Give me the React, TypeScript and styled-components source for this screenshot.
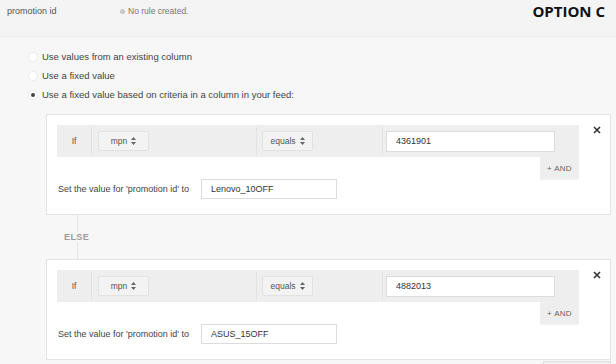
import styled, { createGlobalStyle } from "styled-components";

const GlobalStyle = createGlobalStyle`
  body {
    margin: 0;
    background: #f7f7f7;
    font-family: "Liberation Sans", Arial, sans-serif;
    color: #444;
  }
`;

const Header = styled.div`
  display: flex;
  align-items: flex-start;
  height: 37px;
  padding: 4px 11px 0 7px;
  box-sizing: border-box;
  background: #f4f4f4;
  border-bottom: 1px solid #ebebeb;
`;

const AttrName = styled.div`
  width: 113px;
  font-size: 9px;
  line-height: 14px;
  color: #555;
`;

const Status = styled.div`
  display: flex;
  align-items: center;
  gap: 3px;
  font-size: 8.5px;
  line-height: 14px;
  color: #777;
  &::before {
    content: "";
    width: 5px;
    height: 5px;
    border-radius: 50%;
    background: #c8c8c8;
  }
`;

const OptionTag = styled.div`
  margin-left: auto;
  font-family: "Open Sans", "Liberation Sans", sans-serif;
  font-weight: 700;
  font-size: 15px;
  line-height: 14px;
  color: #111;
`;

const Body = styled.div`
  padding: 10px 0 0 0;
`;

const RadioList = styled.div`
  display: flex;
  flex-direction: column;
  padding-left: 28px;
  margin-bottom: 10px;
`;

const RadioRow = styled.label`
  display: flex;
  align-items: center;
  gap: 4px;
  height: 19px;
  font-size: 9.5px;
  color: #444;
`;

const RadioDot = styled.span<{ $checked?: boolean }>`
  width: 10px;
  height: 10px;
  box-sizing: border-box;
  border-radius: 50%;
  background: #fff;
  border: 1px solid #ececec;
  display: flex;
  align-items: center;
  justify-content: center;
  &::after {
    content: "";
    width: 4px;
    height: 4px;
    border-radius: 50%;
    background: ${(p) => (p.$checked ? "#444" : "transparent")};
  }
`;

const Rules = styled.div`
  margin-left: 46px;
  width: 565px;
`;

const Card = styled.div`
  display: flex;
  background: #fff;
  border: 1px solid #e3e3e3;
  padding: 10px 0 15px 10px;
`;

const CardMain = styled.div`
  width: 522px;
  display: flex;
  flex-direction: column;
`;

const CloseButton = styled.div`
  padding: 1px 0 0 14px;
  height: 9px;
  svg {
    display: block;
  }
`;

const ConditionRow = styled.div`
  display: flex;
  align-items: center;
  height: 32px;
  background: #eeeeee;
`;

const Cell = styled.div<{ $w: number; $pad?: number }>`
  display: flex;
  align-items: center;
  width: ${(p) => p.$w}px;
  padding-left: ${(p) => p.$pad ?? 0}px;
  box-sizing: border-box;
  height: 100%;
  font-size: 8.5px;
  color: #555;
`;

const IfCell = styled(Cell)`
  justify-content: center;
`;

const Divider = styled.div`
  width: 1px;
  height: 28px;
  background: #e2e2e2;
`;

const Select = styled.div`
  display: flex;
  align-items: center;
  justify-content: center;
  gap: 4px;
  width: 51px;
  height: 20px;
  box-sizing: border-box;
  background: #f3f3f3;
  border: 1px solid #e2e2e2;
  border-radius: 2px;
  font-size: 8.5px;
  color: #555;
`;

const TextInput = styled.div<{ $w: number; $h: number }>`
  display: flex;
  align-items: center;
  width: ${(p) => p.$w}px;
  height: ${(p) => p.$h}px;
  box-sizing: border-box;
  padding-left: 9px;
  background: #fff;
  border: 1px solid #dcdcdc;
  font-size: 9px;
  color: #333;
`;

const AndButton = styled.div`
  align-self: flex-end;
  width: 39px;
  height: 22px;
  display: flex;
  align-items: center;
  justify-content: center;
  background: #eeeeee;
  border-radius: 0 0 2px 2px;
  box-shadow: 0 1px 1px rgba(0, 0, 0, 0.06);
  font-size: 8px;
  letter-spacing: 0.3px;
  color: #666;
`;

const SetRow = styled.div`
  display: flex;
  align-items: center;
  height: 20px;
`;

const SetLabel = styled.div`
  width: 144px;
  padding-left: 1px;
  box-sizing: border-box;
  font-size: 9px;
  color: #444;
`;

const ElseZone = styled.div`
  position: relative;
  height: 44px;
  display: flex;
  align-items: center;
  padding-left: 18px;
  &::before {
    content: "";
    position: absolute;
    left: 31px;
    top: 0;
    bottom: 0;
    width: 1px;
    background: #e4e4e4;
  }
`;

const ElseLabel = styled.span`
  position: relative;
  background: #f7f7f7;
  font-size: 9px;
  font-weight: 700;
  letter-spacing: 0.4px;
  color: #9a9a9a;
`;

const Footer = styled.div`
  display: flex;
  justify-content: flex-end;
  margin-top: 1px;
`;

const FooterButton = styled.div`
  width: 66px;
  height: 24px;
  background: #efefef;
  border: 1px solid #e0e0e0;
`;

function Arrows() {
  return (
    <svg width="5" height="8" viewBox="0 0 5 8">
      <path d="M2.5 0 L5 3 L0 3 Z M0 5 L5 5 L2.5 8 Z" fill="#666" />
    </svg>
  );
}

function CloseIcon() {
  return (
    <svg width="8" height="8" viewBox="0 0 8 8">
      <path d="M1 1 L7 7 M7 1 L1 7" stroke="#333" strokeWidth="1.6" />
    </svg>
  );
}

interface IRule {
  field: string;
  op: string;
  value: string;
  result: string;
}

const rules: IRule[] = [
  { field: "mpn", op: "equals", value: "4361901", result: "Lenovo_10OFF" },
  { field: "mpn", op: "equals", value: "4882013", result: "ASUS_15OFF" },
];

function RuleCard({ rule }: { rule: IRule }) {
  return (
    <Card>
      <CardMain>
        <ConditionRow>
          <IfCell $w={34}>If</IfCell>
          <Divider />
          <Cell $w={164} $pad={6}>
            <Select>
              {rule.field} <Arrows />
            </Select>
          </Cell>
          <Divider />
          <Cell $w={125} $pad={5}>
            <Select>
              {rule.op} <Arrows />
            </Select>
          </Cell>
          <Divider />
          <Cell $w={196} $pad={3}>
            <TextInput $w={169} $h={21}>
              {rule.value}
            </TextInput>
          </Cell>
        </ConditionRow>
        <AndButton>+ AND</AndButton>
        <SetRow>
          <SetLabel>Set the value for 'promotion id' to</SetLabel>
          <TextInput $w={136} $h={20}>
            {rule.result}
          </TextInput>
        </SetRow>
      </CardMain>
      <CloseButton>
        <CloseIcon />
      </CloseButton>
    </Card>
  );
}

export default function App() {
  return (
    <>
      <GlobalStyle />
      <Header>
        <AttrName>promotion id</AttrName>
        <Status>No rule created.</Status>
        <OptionTag>OPTION C</OptionTag>
      </Header>
      <Body>
        <RadioList>
          <RadioRow>
            <RadioDot />
            Use values from an existing column
          </RadioRow>
          <RadioRow>
            <RadioDot />
            Use a fixed value
          </RadioRow>
          <RadioRow>
            <RadioDot $checked />
            Use a fixed value based on criteria in a column in your feed:
          </RadioRow>
        </RadioList>
        <Rules>
          <RuleCard rule={rules[0]} />
          <ElseZone>
            <ElseLabel>ELSE</ElseLabel>
          </ElseZone>
          <RuleCard rule={rules[1]} />
          <Footer>
            <FooterButton />
          </Footer>
        </Rules>
      </Body>
    </>
  );
}
